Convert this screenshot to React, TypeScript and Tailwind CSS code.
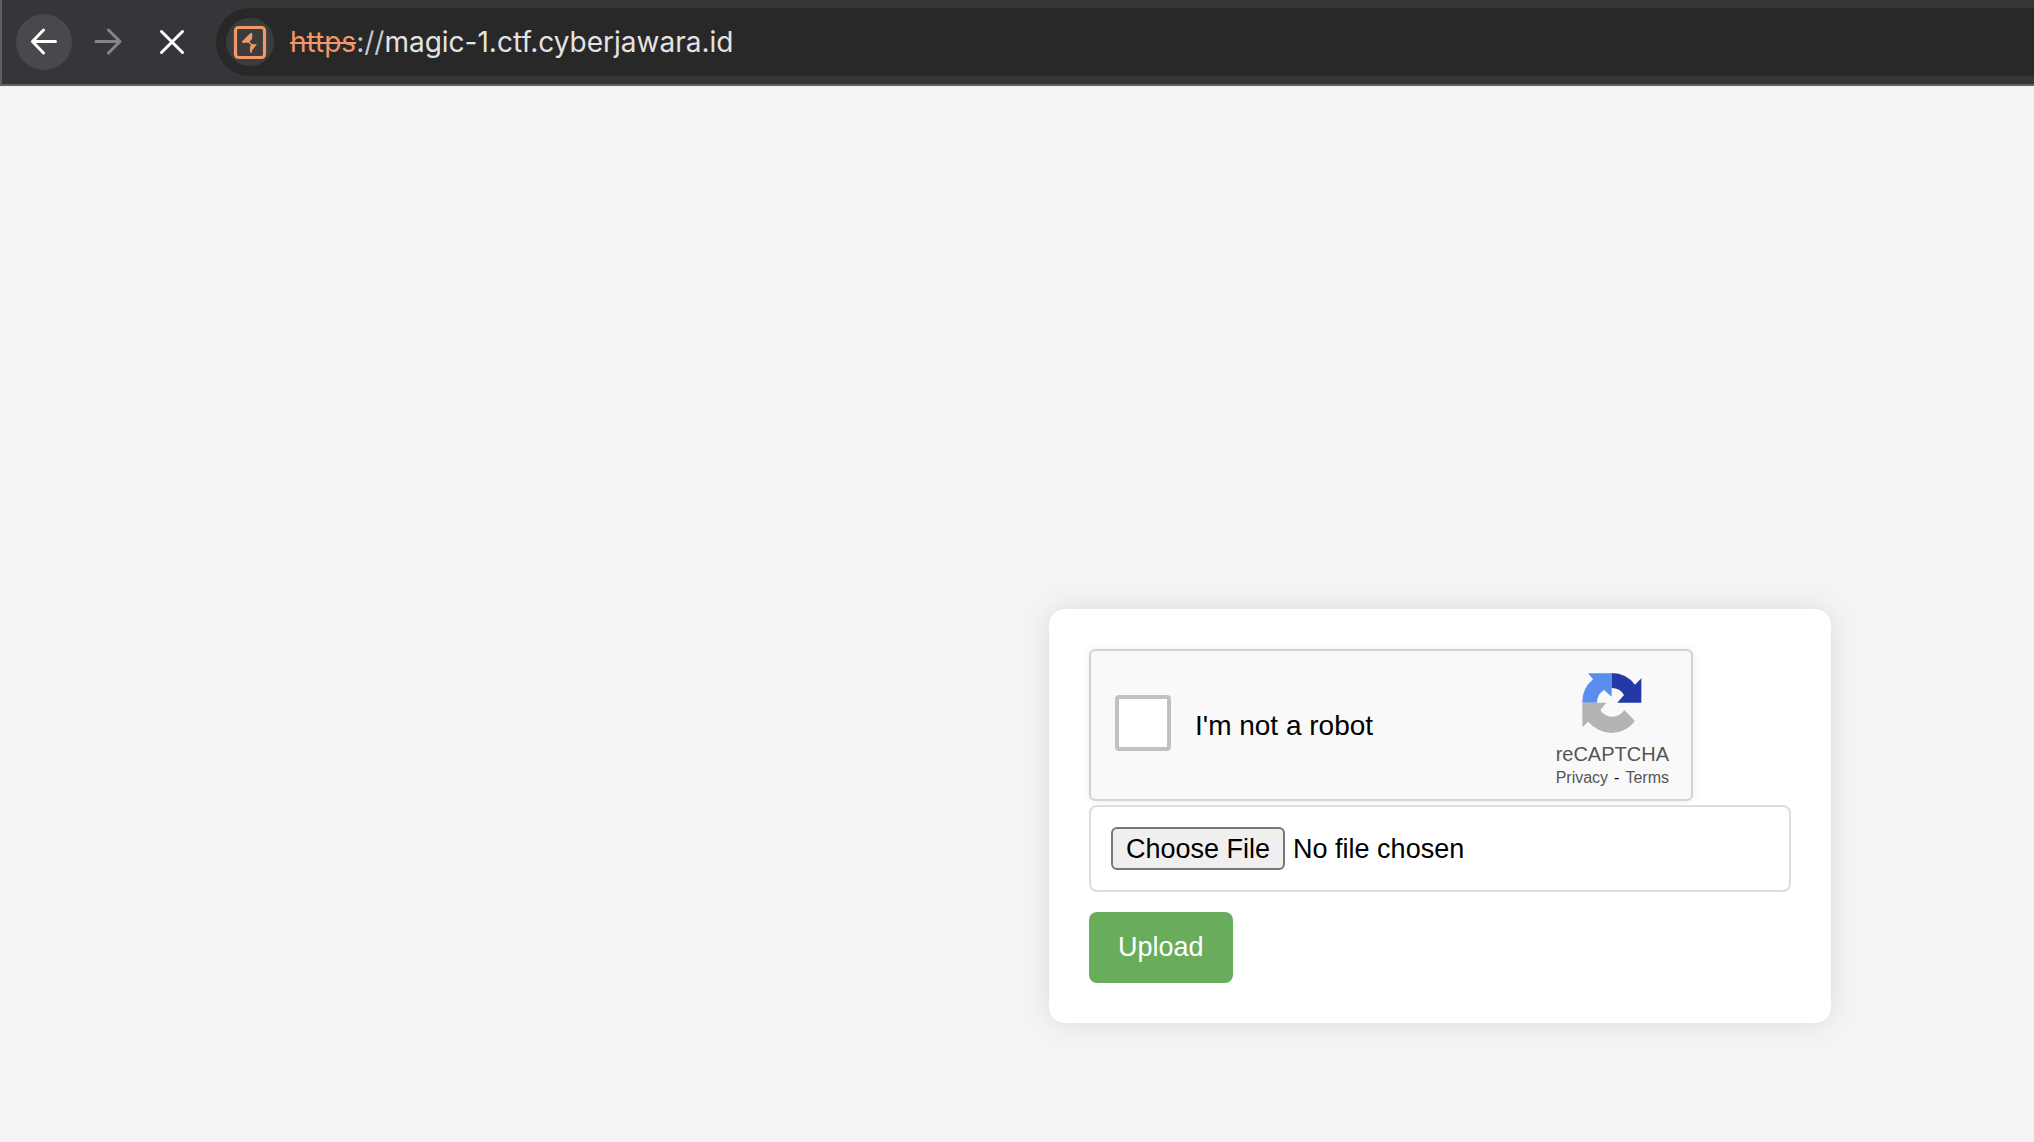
function BackArrow() {
  return (
    <svg className="h-7 w-7" viewBox="0 0 28 28" fill="none" stroke="currentColor" strokeWidth="3" strokeLinecap="round" strokeLinejoin="round" aria-hidden="true">
      <path d="M25.500 13.500H3M13.500 2 2.500 13.500 13.500 25" />
    </svg>
  );
}

function ForwardArrow() {
  return (
    <svg className="h-7 w-7" viewBox="0 0 28 28" fill="none" stroke="currentColor" strokeWidth="3" strokeLinecap="round" strokeLinejoin="round" aria-hidden="true">
      <path d="M2 13.500H25.500M14.500 2 26 13.500 14.500 25" />
    </svg>
  );
}

function StopCross() {
  return (
    <svg className="h-7 w-7" viewBox="0 0 28 28" fill="none" stroke="currentColor" strokeWidth="3" strokeLinecap="round" aria-hidden="true">
      <path d="M3.500 3.500 24.500 24.500M24.500 3.500 3.500 24.500" />
    </svg>
  );
}

function BoltIcon() {
  return (
    <svg className="h-9 w-9" viewBox="0 0 36 36" aria-hidden="true">
      <rect x="3.500" y="3.500" width="29" height="30" rx="3" fill="none" stroke="#f29766" strokeWidth="3.200" />
      <path d="M18.500 9H20.200V14.500L17.500 18 20.500 20.200H25L20 26.500V28.500H18V23L19 21 16.500 18.800H10V17.500Z" fill="#f29766" />
    </svg>
  );
}

function CaptchaLogo() {
  return (
    <svg className="h-[62px] w-[60px]" viewBox="400 248 180 186" aria-hidden="true">
      <path d="M401 340A88 88 0 0 1 433 270L418 252H489V322L466 302A44 44 0 0 0 445 340Z" fill="#5a8dee" />
      <path d="M489 251A89 89 0 0 1 559 286L578 267V340H506L526 317A42 42 0 0 0 489 296Z" fill="#2339a5" />
      <path d="M401 340H473L455 362A42 42 0 0 0 527 362L556 392Q559 395 556 399A88 88 0 0 1 419 397L401 413Z" fill="#b4b4b4" />
    </svg>
  );
}

export default function App() {
  return (
    <div className="flex min-h-screen flex-col bg-[#f4f4f4] font-['Liberation_Sans',Arial,sans-serif] text-black">
      <header className="flex items-center border-b-2 border-l-2 border-[#5f6064] bg-[#35363a] py-2 pl-3.5">
        <nav className="flex items-center gap-2" aria-label="Browser">
          <button type="button" aria-label="Back" className="flex size-14 items-center justify-center rounded-full bg-[#48494c] text-white">
            <BackArrow />
          </button>
          <button type="button" aria-label="Forward" disabled className="flex size-14 items-center justify-center rounded-full text-[#85868a]">
            <ForwardArrow />
          </button>
          <button type="button" aria-label="Stop loading" className="flex size-14 items-center justify-center rounded-full text-white">
            <StopCross />
          </button>
        </nav>
        <div className="ml-4 flex h-[68px] flex-1 items-center gap-4 rounded-l-full bg-[#282828] pl-2.5">
          <button type="button" aria-label="Site information" className="flex size-12 items-center justify-center rounded-full bg-[#3c3c3c]">
            <BoltIcon />
          </button>
          <p className="font-[Inter,sans-serif] text-[28px] leading-9 text-[#e3e3e3]">
            <s className="text-[#f29766]">https</s>
            <span className="text-[#c7c7c7]">://</span>
            magic-1.ctf.cyberjawara.id
          </p>
        </div>
      </header>

      <main className="flex flex-1 items-end justify-end pr-[203px] pb-[119px] pl-10">
        <form className="w-full max-w-[782px] rounded-2xl bg-white p-10 shadow-[0_0_28px_rgba(0,0,0,0.1)]" onSubmit={(e) => e.preventDefault()}>
          <div className="mb-1 flex h-[152px] max-w-[604px] items-center rounded-md border-2 border-[#d3d3d3] bg-[#f9f9f9] pl-6 shadow-[0_0_8px_rgba(0,0,0,0.08)]">
            <div className="flex items-center pb-1">
              <input id="robot" type="checkbox" className="size-14 appearance-none rounded-sm border-4 border-[#c1c1c1] bg-white" />
              <label htmlFor="robot" className="pt-1.5 pl-6 text-[28px] leading-9">I'm not a robot</label>
            </div>
            <div className="mr-[22px] ml-auto flex flex-col items-center pt-3 text-[#555]">
              <CaptchaLogo />
              <span className="mt-2 text-xl leading-6">reCAPTCHA</span>
              <span className="flex gap-1.5 text-base leading-6">
                <a href="#privacy">Privacy</a>
                <span className="text-black">-</span>
                <a href="#terms">Terms</a>
              </span>
            </div>
          </div>
          <input
            type="file"
            aria-label="File to upload"
            className="block w-full rounded-lg border-2 border-[#ddd] p-5 text-[27px] leading-8 file:mr-2 file:h-[43px] file:rounded-md file:border-2 file:border-solid file:border-[#767676] file:bg-[#efefef] file:px-[13px] file:text-black"
          />
          <button type="submit" className="mt-5 block h-[71px] rounded-lg bg-[#69ad5c] px-[29px] text-[27px] text-white">Upload</button>
        </form>
      </main>
    </div>
  );
}
